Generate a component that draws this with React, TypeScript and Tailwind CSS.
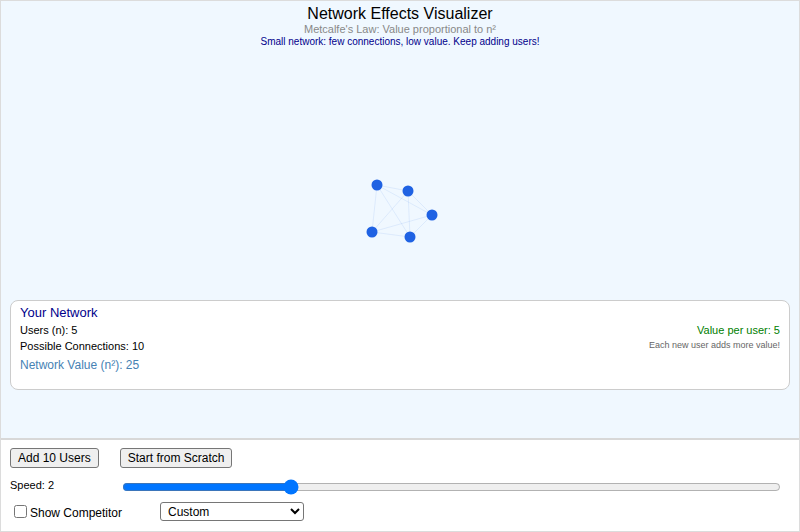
import React from "react"

const nodes = [
  { x: 377, y: 137 },
  { x: 408, y: 143 },
  { x: 432, y: 167 },
  { x: 372, y: 184 },
  { x: 410, y: 189 },
]

const NetworkCanvas = () => {
  const links: { a: number; b: number }[] = []
  for (let i = 0; i < nodes.length; i++) {
    for (let j = i + 1; j < nodes.length; j++) links.push({ a: i, b: j })
  }
  return (
    <svg width="798" height="252" viewBox="1 48 798 252" className="block">
      {links.map((l, i) => (
        <line
          key={i}
          x1={nodes[l.a].x}
          y1={nodes[l.a].y + 48}
          x2={nodes[l.b].x}
          y2={nodes[l.b].y + 48}
          stroke="rgba(100,149,237,0.14)"
          strokeWidth={1}
        />
      ))}
      {nodes.map((n, i) => (
        <circle key={i} cx={n.x} cy={n.y + 48} r={5.5} fill="#1f62e3" />
      ))}
    </svg>
  )
}

const App = () => {
  return (
    <div className="w-[800px] h-[532px] border border-[#dcdcdc] font-['Liberation_Sans',Arial,sans-serif] flex flex-col overflow-hidden">
      <div className="h-[437px] bg-[#f0f8ff] flex flex-col">
        <div className="pt-[4px] text-center">
          <h1 className="text-[16px] leading-[18px] text-black">Network Effects Visualizer</h1>
          <p className="text-[11px] leading-[13px] text-[#888888]">Metcalfe's Law: Value proportional to n²</p>
          <p className="text-[10px] leading-[12px] text-[#00008b]">Small network: few connections, low value. Keep adding users!</p>
        </div>
        <NetworkCanvas />
        <div className="mx-[9px] h-[90px] bg-white border border-[#cccccc] rounded-[8px] flex justify-between pl-[9px] pr-[9px] pt-[4px]">
          <div>
            <div className="text-[13px] leading-[16px] text-[#00008b]">Your Network</div>
            <div className="text-[11px] leading-[16px] mt-[1px] text-black">Users (n): 5</div>
            <div className="text-[11px] leading-[16px] text-black">Possible Connections: 10</div>
            <div className="text-[12px] leading-[16px] mt-[3px] text-[#4682b4]">Network Value (n²): 25</div>
          </div>
          <div className="text-right pt-[17px]">
            <div className="text-[11px] leading-[16px] text-[#008000]">Value per user: 5</div>
            <div className="text-[9px] leading-[14px] text-[#666666]">Each new user adds more value!</div>
          </div>
        </div>
      </div>
      <div className="border-t-[2px] border-[#d8d8d8] bg-white flex-1 pl-[9px] pt-[8px]">
        <div className="flex gap-[21px]">
          <button className="h-[20px] px-[7px] text-[12px] bg-[#efefef] border border-[#767676] rounded-[3px] text-black leading-none">
            Add 10 Users
          </button>
          <button className="h-[20px] px-[7px] text-[12px] bg-[#efefef] border border-[#767676] rounded-[3px] text-black leading-none">
            Start from Scratch
          </button>
        </div>
        <div className="flex items-start mt-[11px]">
          <span className="w-[112px] text-[11px] leading-[14px] -mt-[1px] text-black">Speed: 2</span>
          <input type="range" min={1} max={5} defaultValue={2} className="w-[659px] h-[16px]" />
        </div>
        <div className="flex items-center mt-[6px]">
          <label className="w-[150px] flex items-center text-[12px] text-black">
            <input type="checkbox" className="ml-[4px] mr-[3px] w-[13px] h-[13px]" />
            <span className="mt-[3px]">Show Competitor</span>
          </label>
          <select className="w-[144px] h-[19px] text-[12px] pl-[3px] bg-white border border-[#767676] rounded-[3px] text-black">
            <option>Custom</option>
          </select>
        </div>
      </div>
    </div>
  )
}

export default App
